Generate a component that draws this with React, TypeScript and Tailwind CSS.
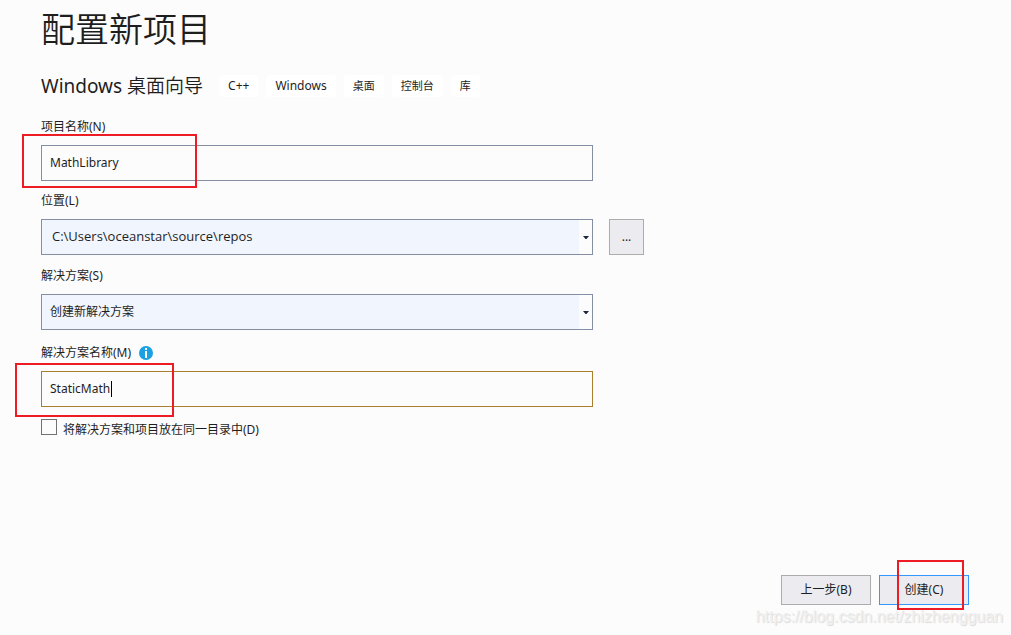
import { useState } from "react";
import type { ReactNode } from "react";

const tags = ["C++", "Windows", "桌面", "控制台", "库"];

function Field({ id, label, info, children }: { id: string; label: string; info?: boolean; children: ReactNode }) {
  return (
    <div>
      <div className="mb-2.5 flex h-4 items-center gap-2">
        <label htmlFor={id}>{label}</label>
        {info && <InfoIcon />}
      </div>
      {children}
    </div>
  );
}

function InfoIcon() {
  return (
    <svg className="size-3.5" viewBox="0 0 14 14" role="img" aria-label="info">
      <circle cx="7" cy="7" r="7" fill="#1ba1e2" />
      <rect x="6" y="2" width="2" height="2" fill="#fff" />
      <rect x="6" y="5" width="2" height="7" fill="#fff" />
    </svg>
  );
}

function DropDown({ id, options, look }: { id: string; options: string[]; look: string }) {
  return (
    <div className="relative w-full max-w-[552px] min-w-0">
      <select
        id={id}
        className={`block h-9 w-full appearance-none rounded-none border border-[#848fa3] bg-[#f1f5fe] pr-4 outline-none ${look}`}
      >
        {options.map((o) => (
          <option key={o}>{o}</option>
        ))}
      </select>
      <span className="pointer-events-none absolute inset-y-px right-px flex w-[13px] items-center justify-center bg-[#fcfcfc]">
        <svg className="h-[3px] w-[6px]" viewBox="0 0 6 3">
          <path d="M0 0h6L3.5 3h-1z" fill="#1b293e" />
        </svg>
      </span>
    </div>
  );
}

export default function App() {
  const [project, setProject] = useState("MathLibrary");
  const [solution, setSolution] = useState("StaticMath");

  return (
    <main className="relative flex min-h-screen flex-col bg-[#fcfcfc] pr-[42px] pb-[30px] pl-[41px] font-['Noto_Sans','Noto_Sans_CJK_SC',sans-serif] text-xs text-[#1e1e1e]">
      <h1 className="pt-[7px] text-[34px] leading-[44px] font-[350]">配置新项目</h1>

      <div className="mt-[21px] flex flex-wrap items-center gap-x-4">
        <h2 className="text-[19px] leading-7">
          Windows <span className="font-[350]">桌面向导</span>
        </h2>
        <ul className="flex gap-2">
          {tags.map((tag) => (
            <li
              key={tag}
              className={`rounded bg-white px-[9px] py-[3px] leading-4 ${/^[A-Z]/.test(tag) ? "text-xs" : "text-[11px]"}`}
            >
              {tag}
            </li>
          ))}
        </ul>
      </div>

      <form id="project-form" className="mt-[19px] flex flex-col" onSubmit={(e) => e.preventDefault()}>
        <Field id="project" label="项目名称(N)">
          <div className="relative max-w-[552px]">
            <input
              id="project"
              type="text"
              value={project}
              onChange={(e) => setProject(e.target.value)}
              className="block h-9 w-full border border-[#848fa3] bg-[#fcfcfc] px-2 pb-0.5 outline-none"
            />
            <span className="pointer-events-none absolute -top-[11px] -left-[19px] h-[54px] w-[175px] border-2 border-[#ed1c24]" />
          </div>
        </Field>

        <div className="mt-3">
          <Field id="location" label="位置(L)">
            <div className="flex gap-4">
              <DropDown
                id="location"
                options={["C:\\Users\\oceanstar\\source\\repos"]}
                look="pl-2.5 font-['Open_Sans',sans-serif] text-[13px]"
              />
              <button type="button" aria-label="浏览" className="h-9 w-[35px] shrink-0 border border-[#acacac] bg-[#ecebf0]">
                ...
              </button>
            </div>
          </Field>
        </div>

        <div className="mt-[13px]">
          <Field id="solution" label="解决方案(S)">
            <DropDown id="solution" options={["创建新解决方案"]} look="pl-2" />
          </Field>
        </div>

        <div className="mt-[15px]">
          <Field id="solution-name" label="解决方案名称(M)" info>
            <div className="relative max-w-[552px]">
              <input
                id="solution-name"
                type="text"
                value={solution}
                onChange={(e) => setSolution(e.target.value)}
                className="block h-9 w-full border border-[#a97f2d] bg-[#fcfcfc] px-2 pb-0.5 outline-none"
              />
              <span className="pointer-events-none absolute top-2.5 left-[70px] h-4 w-px bg-black" />
              <span className="pointer-events-none absolute -top-2 -left-[26px] h-[54px] w-[159px] border-2 border-[#ed1c24]" />
            </div>
          </Field>
        </div>

        <label className="mt-3 flex items-start gap-1.5">
          <input type="checkbox" className="size-4 appearance-none border border-[#717171] bg-[#fcfcfc] checked:bg-[#1ba1e2]" />
          <span className="pt-[3px] leading-4">将解决方案和项目放在同一目录中(D)</span>
        </label>
      </form>

      <footer className="mt-auto flex justify-end gap-2 pt-8">
        <button type="button" className="h-[30px] w-[90px] border border-[#acacac] bg-[#ecebf0]">
          上一步(B)
        </button>
        <div className="relative">
          <button type="submit" form="project-form" className="h-[30px] w-[90px] border border-[#3399ff] bg-[#ecebf0]">
            创建(C)
          </button>
          <span className="pointer-events-none absolute -top-[15px] left-[18px] h-[50px] w-[67px] border-2 border-[#ed1c24]" />
        </div>
      </footer>

      <span className="pointer-events-none absolute right-2 bottom-2 font-['Liberation_Sans',sans-serif] text-base leading-5 text-[#f0f0f0] [text-shadow:1px_1px_1px_#dadada]">
        https://blog.csdn.net/zhizhengguan
      </span>
    </main>
  );
}
